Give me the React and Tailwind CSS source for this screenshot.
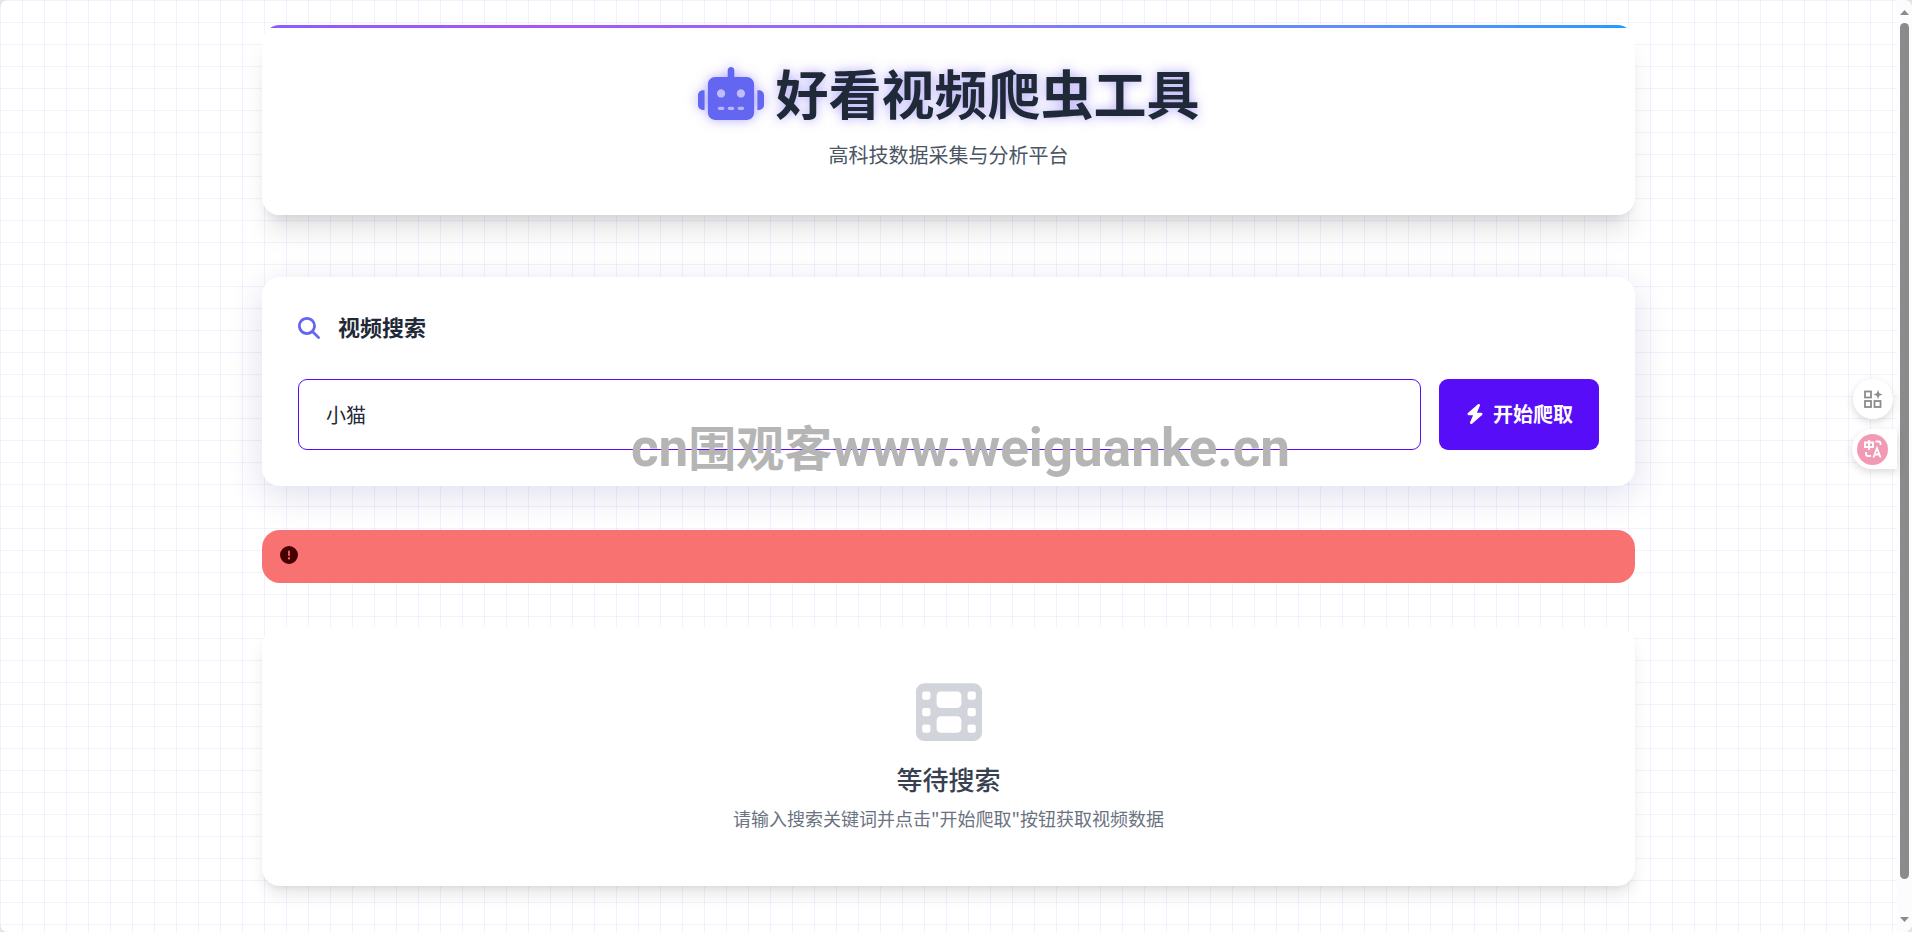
import React, { useState } from "react";
import {
  FaRobot,
  FaMagnifyingGlass,
  FaBolt,
  FaCircleExclamation,
  FaFilm,
} from "react-icons/fa6";

const Header = () => (
  <header className="relative overflow-hidden rounded-[18px] bg-white px-9 pt-8 pb-[46px] text-center">
    <div className="absolute inset-x-0 top-0 h-[3px] bg-linear-to-r from-[#8b5cff] via-[#a855f7] via-20% to-[#1e9bff]" />
    <h1 className="flex items-start justify-center gap-3 text-[53px] leading-[70px] font-bold text-[#1f2937] text-shadow-[0_0_11px_rgba(99,80,241,0.5)]">
      <FaRobot
        className="mt-[10px] h-[53px] w-[66px] text-[#6366f1] drop-shadow-[0_0_6px_rgba(99,80,241,0.5)]"
        aria-hidden="true"
      />
      好看视频爬虫工具
    </h1>
    <p className="mt-[14px] text-[20px] leading-7 text-[#4b5563]">高科技数据采集与分析平台</p>
  </header>
);

const SearchCard = () => {
  const [keyword, setKeyword] = useState("小猫");

  return (
    <section className="rounded-[18px] bg-white px-9 pt-[34px] pb-9 shadow-[0_9px_35px_rgba(31,38,135,0.15)]">
      <h2 className="mb-[38px] flex items-end gap-[18px] text-[22px] leading-[30px] font-bold text-[#1f2937]">
        <FaMagnifyingGlass className="mb-[2px] size-[22px] text-[#6366f1]" aria-hidden="true" />
        <label htmlFor="keyword">视频搜索</label>
      </h2>
      <form className="flex gap-[18px]" onSubmit={(e) => e.preventDefault()}>
        <input
          id="keyword"
          type="text"
          value={keyword}
          onChange={(e) => setKeyword(e.target.value)}
          className="h-[71px] min-w-0 flex-1 rounded-[9px] border border-[#570df8] bg-white px-[27px] text-[20px] text-[#1f2937] outline-none"
        />
        <button
          type="submit"
          className="flex h-[71px] items-center gap-2 rounded-[9px] bg-[#570df8] px-[26px] pb-[2px] text-[20px] font-bold text-white"
        >
          <FaBolt className="size-5" aria-hidden="true" />
          开始爬取
        </button>
      </form>
    </section>
  );
};

const ErrorAlert = () => (
  <div role="alert" className="rounded-[18px] bg-[#f87272] px-[18px] pt-4 pb-[19px]">
    <FaCircleExclamation className="size-[18px] text-[#470000]" aria-hidden="true" />
  </div>
);

const EmptyState = () => (
  <section className="flex flex-col items-center rounded-[18px] bg-white px-9 pt-[52px] pb-[55px] text-center shadow-[0_11px_17px_-3px_rgba(0,0,0,0.1),0_4px_7px_-4px_rgba(0,0,0,0.1)]">
    <FaFilm className="size-[66px] text-[#d1d5db]" aria-hidden="true" />
    <h3 className="mt-4 text-[26px] leading-9 font-medium text-[#374151]">等待搜索</h3>
    <p className="mt-2 text-[18px] leading-[26px] text-[#6b7280]">
      请输入搜索关键词并点击"开始爬取"按钮获取视频数据
    </p>
  </section>
);

const FloatingTools = () => (
  <div className="fixed top-[379px] right-[15px] flex flex-col items-end gap-[10px]">
    <button
      type="button"
      aria-label="工具"
      className="mr-1 flex size-10 items-center justify-center rounded-full bg-white shadow-[0_3px_8px_rgba(0,0,0,0.15)]"
    >
      <svg viewBox="0 0 20 20" className="size-5" fill="none" stroke="#8c8c8c" strokeWidth="1.8">
        <rect x="2" y="2.500" width="6" height="6" />
        <rect x="2" y="12" width="6" height="6" />
        <rect x="11.500" y="12" width="6" height="6" />
        <path
          d="M15 1 L16.300 4.200 L19.500 5.500 L16.300 6.800 L15 10 L13.700 6.800 L10.500 5.500 L13.700 4.200 Z"
          fill="#8c8c8c"
          stroke="none"
        />
      </svg>
    </button>
    <button
      type="button"
      aria-label="翻译"
      className="flex h-10 w-[45px] items-center rounded-l-full bg-white pl-[5px] shadow-[0_3px_8px_rgba(0,0,0,0.15)]"
    >
      <span className="flex size-[31px] items-center justify-center rounded-full bg-[#f29ab4]">
        <svg viewBox="0 0 20 20" className="size-5" fill="none" stroke="white" strokeWidth="1.8">
          <path d="M2 3.500h8v4.500h-8zM6 1v10" />
          <path d="M12.500 2.500h3a2 2 0 0 1 2 2v1.500M3 13v2a2 2 0 0 0 2 2h3" />
          <path d="M10.500 18.500l3.500-9.500 3.500 9.500M11.800 15.500h4.500" />
        </svg>
      </span>
    </button>
  </div>
);

const ScrollRail = () => (
  <div
    className="sticky top-0 flex h-screen w-[15px] shrink-0 flex-col items-center rounded-r-lg bg-[#fcfcfc] py-[10px]"
    aria-hidden="true"
  >
    <svg viewBox="0 0 9 5" className="h-[5px] w-[9px]" fill="#8b8b8b">
      <path d="M4.500 0L9 5H0z" />
    </svg>
    <div className="mt-2 mb-[38px] w-[9px] flex-1 rounded-full bg-[#8b8b8b]" />
    <svg viewBox="0 0 9 5" className="h-[5px] w-[9px]" fill="#8b8b8b">
      <path d="M0 0h9L4.500 5z" />
    </svg>
  </div>
);

const App = () => (
  <div className="bg-[#e4e4e4]">
    <div className="flex min-h-screen rounded-lg bg-white bg-[linear-gradient(rgba(99,80,255,0.08)_1px,transparent_1px),linear-gradient(90deg,rgba(99,80,255,0.08)_1px,transparent_1px)] bg-size-[22px_22px] font-['Noto_Sans_CJK_SC',sans-serif]">
      <main className="min-w-0 flex-1">
        <div className="mx-auto flex max-w-[1409px] flex-col gap-11 px-[18px] pt-[25px] pb-11">
          <div className="mb-[18px] rounded-[18px] shadow-[0_22px_27px_-5px_rgba(0,0,0,0.1),0_9px_11px_-6px_rgba(0,0,0,0.1)]">
            <Header />
          </div>
          <div className="relative">
            <SearchCard />
            <p className="pointer-events-none absolute top-[133px] left-[369px] flex items-baseline text-[48px] leading-[70px] font-bold whitespace-nowrap text-[#b5b5b5]">
              <span className="font-['Roboto',sans-serif] text-[53px]">cn</span>
              围观客
              <span className="font-['Roboto',sans-serif] text-[53px]">www.weiguanke.cn</span>
            </p>
          </div>
          <ErrorAlert />
          <EmptyState />
        </div>
      </main>
      <ScrollRail />
    </div>
    <FloatingTools />
  </div>
);

export default App;
